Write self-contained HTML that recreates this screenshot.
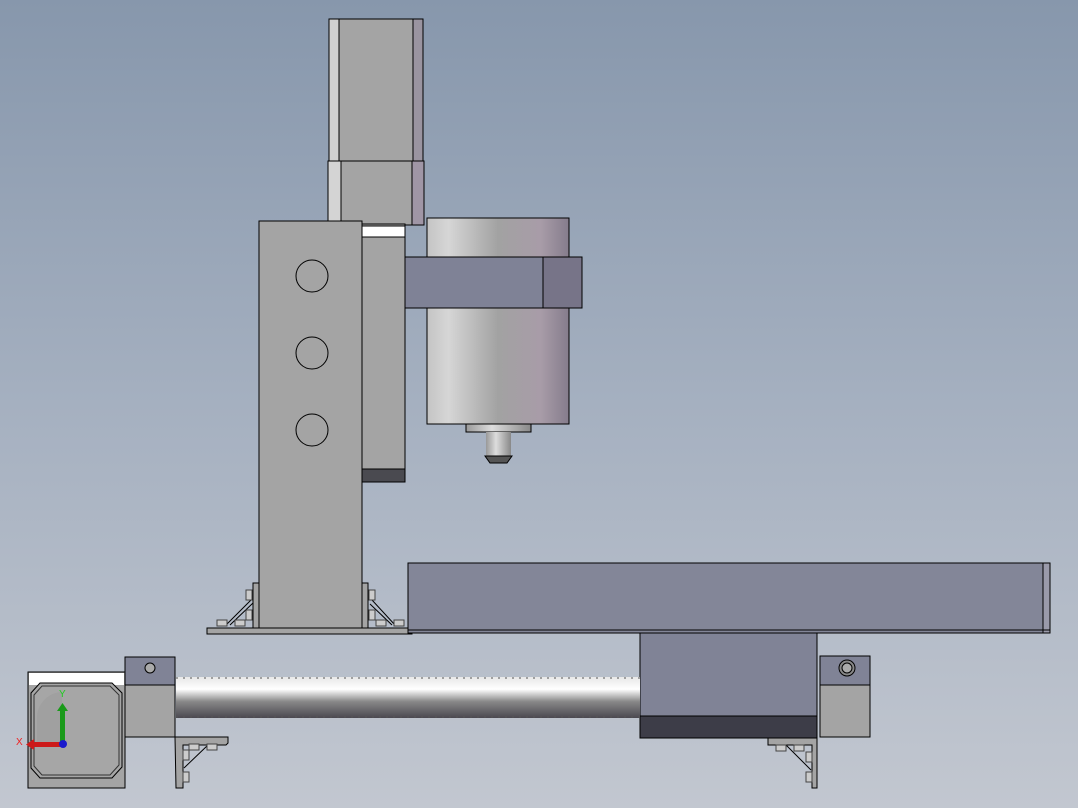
<!DOCTYPE html>
<html><head><meta charset="utf-8"><style>
html,body{margin:0;padding:0;width:1078px;height:808px;overflow:hidden}
svg{display:block}
</style></head><body>
<svg width="1078" height="808" viewBox="0 0 1078 808" xmlns="http://www.w3.org/2000/svg">
<defs>
<linearGradient id="bg" x1="0" y1="0" x2="0" y2="1">
<stop offset="0" stop-color="#8797ac"/><stop offset="0.5" stop-color="#a5b0c0"/><stop offset="1" stop-color="#c2c7d0"/></linearGradient>
<linearGradient id="cyl" x1="0" y1="0" x2="1" y2="0">
<stop offset="0" stop-color="#c4c4c4"/><stop offset="0.15" stop-color="#d6d6d6"/><stop offset="0.5" stop-color="#a2a2a2"/><stop offset="0.8" stop-color="#a89ca8"/><stop offset="1" stop-color="#857c8c"/></linearGradient>
<linearGradient id="scr" x1="0" y1="0" x2="0" y2="1">
<stop offset="0" stop-color="#e8e8e8"/><stop offset="0.3" stop-color="#ffffff"/><stop offset="0.6" stop-color="#888"/><stop offset="1" stop-color="#4a4850"/></linearGradient>
<linearGradient id="sh" x1="0" y1="0" x2="1" y2="0">
<stop offset="0" stop-color="#999"/><stop offset="0.4" stop-color="#ddd"/><stop offset="1" stop-color="#888"/></linearGradient>
</defs>
<rect width="1078" height="808" fill="url(#bg)"/>
<g stroke="#000" stroke-width="1">
<!-- motor -->
<rect x="329" y="19" width="94" height="142" fill="#a4a4a4"/>
<rect x="329" y="19" width="10" height="142" fill="#d0d0d0"/>
<rect x="413" y="19" width="10" height="142" fill="#9a94a0"/>
<rect x="328" y="161" width="96" height="64" fill="#a4a4a4"/>
<rect x="328" y="161" width="13" height="64" fill="#d4d4d4"/>
<rect x="412" y="161" width="12" height="64" fill="#a096a6"/>
<!-- rear block -->
<rect x="362" y="224" width="43" height="258" fill="#a4a4a4"/>
<rect x="362" y="226" width="43" height="11" fill="#fff"/>
<rect x="362" y="469" width="43" height="13" fill="#4a4a50"/>
<!-- spindle -->
<rect x="466" y="424" width="65" height="8" fill="url(#sh)"/>
<rect x="486" y="432" width="25" height="24" fill="url(#sh)" stroke="none"/>
<path d="M485 456 H512 L507 463 H490 Z" fill="#555"/>
<rect x="427" y="218" width="142" height="206" fill="url(#cyl)"/>
<rect x="405" y="257" width="138" height="51" fill="#7f8296"/>
<rect x="543" y="257" width="39" height="51" fill="#777488"/>
<!-- column plate -->
<rect x="259" y="221" width="103" height="413" fill="#a4a4a4"/>
<circle cx="312" cy="276" r="16" fill="none"/>
<circle cx="312" cy="353" r="16" fill="none"/>
<circle cx="312" cy="430" r="16" fill="none"/>
<!-- base -->
<rect x="207" y="628" width="205" height="6" fill="#a4a4a4"/>
<rect x="253" y="583" width="6" height="45" fill="#a4a4a4"/>
<rect x="362" y="583" width="6" height="45" fill="#a4a4a4"/>
<path d="M226 625 L251 600 M230 625 L253 603" fill="none"/>
<path d="M372 600 L395 625 M370 604 L392 625" fill="none"/>
<g fill="#ccc" stroke="#444"><rect x="246" y="590" width="6" height="10"/><rect x="246" y="610" width="6" height="10"/><rect x="217" y="620" width="10" height="6"/><rect x="235" y="620" width="10" height="6"/>
<rect x="369" y="590" width="6" height="10"/><rect x="369" y="610" width="6" height="10"/><rect x="376" y="620" width="10" height="6"/><rect x="394" y="620" width="10" height="6"/></g>
<!-- table -->
<rect x="408" y="563" width="642" height="70" fill="#838698"/>
<rect x="1043" y="563" width="7" height="70" fill="#9a9aaa"/>
<line x1="408" y1="630" x2="1050" y2="630"/>
<!-- carriage -->
<rect x="640" y="633" width="177" height="105" fill="#808396"/>
<rect x="640" y="716" width="177" height="22" fill="#3d3d48"/>
<!-- screw -->
<rect x="176" y="677" width="464" height="41" fill="url(#scr)" stroke="none"/>
<line x1="176" y1="678" x2="640" y2="678" stroke="#555" stroke-dasharray="2 5"/>
<line x1="176" y1="717" x2="640" y2="717" stroke="#555" stroke-dasharray="2 5"/>
<!-- left bearing -->
<rect x="125" y="657" width="50" height="80" fill="#a4a4a4"/>
<rect x="125" y="657" width="50" height="28" fill="#808396"/>
<circle cx="150" cy="668" r="5" fill="#aaa"/>
<path d="M175 737 H228 V743 L226 745 H183 V788 H176 Z" fill="#a4a4a4"/>
<path d="M184 768 L208 745" fill="none"/>
<g fill="#ccc" stroke="#444"><rect x="183" y="750" width="6" height="10"/><rect x="183" y="772" width="6" height="10"/><rect x="189" y="744" width="10" height="6"/><rect x="207" y="744" width="10" height="6"/></g>
<!-- motor end -->
<rect x="28" y="672" width="97" height="116" fill="#a4a4a4"/>
<rect x="29" y="673" width="95" height="12" fill="#fff" stroke="none"/>
<path d="M40 683 H112 L122 693 V767 L112 778 H40 L31 768 V693 Z" fill="#a6a6a6"/>
<path d="M42 686 H110 L119 695 V765 L110 775 H42 L34 766 V695 Z" fill="none" stroke="#333"/>
<!-- right bearing -->
<rect x="820" y="656" width="50" height="81" fill="#a4a4a4"/>
<rect x="820" y="656" width="50" height="29" fill="#808396"/>
<circle cx="847" cy="668" r="8" fill="#888"/>
<circle cx="847" cy="668" r="5" fill="#aaa"/>
<path d="M768 738 H817 V788 H812 V745 H768 Z" fill="#a4a4a4"/>
<path d="M786 745 L811 770" fill="none"/>
<g fill="#ccc" stroke="#444"><rect x="776" y="745" width="10" height="6"/><rect x="794" y="745" width="10" height="6"/><rect x="806" y="752" width="6" height="10"/><rect x="806" y="772" width="6" height="10"/></g>
</g>
<!-- triad -->
<path d="M37 716 A26 26 0 0 1 62 692 V745 H37 Z" fill="#999" opacity="0.5"/>
<rect x="60" y="710" width="5" height="35" fill="#1a9a1a"/>
<path d="M57 711 L62.5 703 L68 711 Z" fill="#1a9a1a"/>
<rect x="32" y="742" width="30" height="5" fill="#cc1a1a"/>
<path d="M34 739 L26 744.5 L34 750 Z" fill="#cc1a1a"/>
<circle cx="63" cy="744" r="4" fill="#1a1acc"/>
<text x="59" y="697" font-family="Liberation Sans,sans-serif" font-size="10" fill="#2c2">Y</text>
<text x="16" y="745" font-family="Liberation Sans,sans-serif" font-size="10" fill="#e22">X</text>
</svg>
</body></html>
